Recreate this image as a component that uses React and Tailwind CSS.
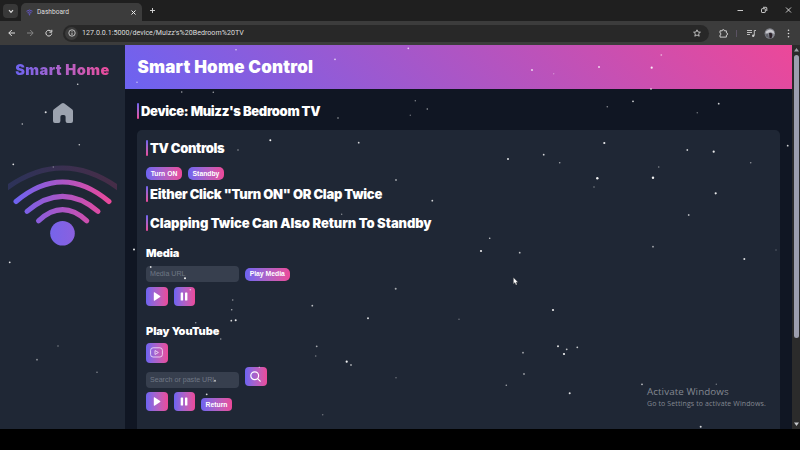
import React from "react";

// [x, y, radius, opacity]
const STARS = [
  [77.7, 84.3, 0.8, 0.8], [45.7, 112.3, 1, 0.85], [22.3, 124, 0.8, 0.7], [79.3, 144.7, 0.8, 0.75],
  [13.3, 164.3, 0.9, 0.85], [53.3, 167, 0.7, 0.4], [134, 249.5, 1, 0.9], [236, 49.7, 0.8, 0.7],
  [335, 59.3, 0.9, 0.7], [137, 82.3, 0.8, 0.6], [181.7, 92, 0.8, 0.6], [213.3, 92.3, 0.8, 0.6],
  [338, 118, 0.8, 0.6], [270.3, 140.3, 1, 0.95], [238, 150, 0.8, 0.5], [358.7, 142.7, 0.9, 0.8],
  [396, 180, 0.9, 0.6], [432.3, 200.7, 0.9, 0.8], [341.7, 214.3, 0.7, 0.5], [150.7, 267, 0.9, 0.8],
  [185, 278.3, 1, 0.95], [190.3, 289.7, 0.8, 0.6], [232.7, 300, 0.8, 0.5], [231.7, 309.7, 0.8, 0.6],
  [231.3, 320.7, 0.9, 0.8], [235.7, 320.3, 1, 0.9], [195.7, 322.7, 0.8, 0.5], [220.7, 339, 0.8, 0.5],
  [215, 380.7, 0.9, 0.7], [206.7, 394.3, 0.9, 0.8], [259.3, 367.3, 0.7, 0.5], [408.3, 48.3, 0.9, 0.7],
  [532, 70, 1.1, 0.7], [553.7, 73.7, 0.7, 0.35], [415.3, 100.7, 0.7, 0.5], [427.3, 109, 0.8, 0.6],
  [410.3, 115.3, 0.7, 0.4], [508, 159, 1, 0.85], [543.7, 154.7, 0.9, 0.8], [489.7, 238.3, 0.8, 0.75],
  [661.3, 55, 0.9, 0.45], [599, 67, 1, 0.75], [651.7, 67.7, 1.1, 0.9], [651, 89, 0.9, 0.6],
  [633, 101.3, 0.9, 0.8], [607.3, 106.7, 0.8, 0.5], [718.7, 103.7, 0.9, 0.8], [697.3, 112.7, 0.8, 0.4],
  [604.3, 143, 1.1, 0.9], [559.7, 162.7, 0.8, 0.6], [687.3, 150, 0.9, 0.75], [713.7, 151.7, 1.1, 0.9],
  [787.7, 145.7, 0.9, 0.8], [750.7, 162.7, 0.8, 0.5], [658.7, 167, 0.8, 0.45], [597.3, 178.3, 1.2, 0.95],
  [594, 187, 0.8, 0.4], [653, 177.7, 1.2, 0.95], [715.7, 193.3, 1.1, 0.9], [688.7, 215, 0.9, 0.65],
  [481, 251, 1.1, 0.9], [519.7, 252.7, 0.9, 0.7], [395.7, 288.7, 1, 0.6], [312.3, 305.7, 0.9, 0.7],
  [368, 318.3, 1, 0.8], [459, 319.3, 0.8, 0.35], [553, 310, 1.1, 0.9], [316.7, 346.3, 0.9, 0.6],
  [315.7, 356, 0.8, 0.4], [346.7, 361.7, 1.1, 0.95], [351, 365, 0.9, 0.6], [558, 346.3, 1, 0.85],
  [523, 352.7, 0.9, 0.6], [524, 374, 0.9, 0.55], [506.3, 385.3, 0.8, 0.6], [396, 377.7, 0.8, 0.35],
  [322.7, 414.7, 0.8, 0.35], [653, 246.7, 0.9, 0.6], [744.3, 259, 1, 0.85], [776, 250, 0.8, 0.25],
  [566.7, 349.3, 0.9, 0.7], [564, 354, 1.1, 0.95], [577.3, 347.3, 0.9, 0.75], [642, 384.3, 0.9, 0.7],
  [716.3, 384.3, 0.7, 0.4], [569.7, 393.3, 1, 0.85], [700.7, 426.7, 1, 0.8], [9.7, 262.3, 0.9, 0.85],
  [58, 346, 0.8, 0.4], [37, 359.7, 0.9, 0.5], [97, 372.3, 0.8, 0.45],
];

function Stars() {
  return (
    <svg className="pointer-events-none absolute inset-0 h-[450px] w-[800px]" viewBox="0 0 800 450">
      {STARS.map(([x, y, r, o], i) => (
        <circle key={i} cx={x} cy={y} r={r} fill="#fff" opacity={o} />
      ))}
    </svg>
  );
}

function Browser() {
  return (
    <div className="font-[Roboto,sans-serif] text-[#dedede]">
      <div className="flex h-[21px] items-start bg-[#1f1f1f]">
        <div className="mt-[4px] ml-[3px] flex h-[14px] w-[15px] items-center justify-center rounded-[4px] bg-[#383838]">
          <svg className="h-[5px] w-[6px]" viewBox="0 0 6 5" fill="none" stroke="#ddd" strokeWidth="1.2"><path d="M1 1.2 3 3.3 5 1.2" /></svg>
        </div>
        <div className="mt-[3px] ml-[3px] flex h-[18px] w-[121px] items-center rounded-t-[5px] bg-[#3c3c3c] pl-[5px]">
          <svg className="h-[7px] w-[7px]" viewBox="0 0 14 13" fill="none" stroke="#6557c5" strokeWidth="2"><path d="M1 4Q7-1 13 4M3 7q4-4 8 0M5 9q2-2 4 0" /><circle cx="7" cy="11" r="1.3" fill="#6557c5" stroke="none" /></svg>
          <span className="ml-[4px] w-[94px] shrink-0 text-[6.6px] leading-[10px]">Dashboard</span>
          <svg className="h-[5px] w-[5px] shrink-0" viewBox="0 0 5 5" stroke="#eee" strokeWidth="1"><path d="m.5.5 4 4m0-4-4 4" /></svg>
        </div>
        <svg className="mt-[8px] ml-[8px] h-[5px] w-[5px]" viewBox="0 0 5 5" stroke="#ddd" strokeWidth=".9"><path d="M2.500 0v5M0 2.500h5" /></svg>
        <svg className="mt-[6px] mr-[8px] ml-auto h-[8px] w-[56px]" viewBox="0 0 56 8" fill="none" stroke="#ddd" strokeWidth=".9">
          <path d="M1.500 4.500h5.500M50 1.500l5 5m0-5-5 5" />
          <rect x="25.500" y="2.700" width="3.800" height="3.800" rx=".6" />
          <path d="M27 1.300h3.100q.7 0 .7.700v3" />
        </svg>
      </div>
      <div className="flex h-[24px] items-center bg-[#3c3c3c] pl-[8px]">
        <svg className="h-[8px] w-[45px]" viewBox="0 0 45 8" fill="none" strokeWidth="1">
          <path stroke="#ddd" d="M7 4H.8M3.800 1 .8 4l3 3" />
          <path stroke="#858585" d="M19 4h6M22.200 1l3 3-3 3" />
          <path stroke="#ddd" d="M43.200 2.500A2.900 2.900 0 1 0 43.700 4.500M43.800.8v2.400h-2.400" />
        </svg>
        <div className="ml-[10px] flex h-[17px] w-[646px] items-center rounded-full bg-[#282828] pl-[2px]">
          <div className="flex h-[13px] w-[13px] items-center justify-center rounded-full bg-[#3c3c3c]">
            <svg className="h-[8px] w-[8px]" viewBox="0 0 8 8" fill="none" stroke="#ddd" strokeWidth=".8"><circle cx="4" cy="4" r="3.200" /><path d="M4 3.600V6M4 2v.8" /></svg>
          </div>
          <span className="ml-[4px] text-[7.1px] leading-[10px] tracking-[0.02px]">127.0.0.1:5000/device/Muizz's%20Bedroom%20TV</span>
          <svg className="mr-[8px] ml-auto h-[8px] w-[8px]" viewBox="0 0 8 8" fill="none" stroke="#ddd" strokeWidth=".8"><path d="m4 .8 1 2.200 2.400.2-1.800 1.600.6 2.400L4 6 1.800 7.200l.6-2.400L.6 3.200 3 3Z" /></svg>
        </div>
        <svg className="ml-[9px] h-[11px] w-[75px]" viewBox="0 0 75 11" fill="none" stroke="#ccc" strokeWidth="1">
          <path d="M2 2.800h2.200q0-1.200 1.100-1.200t1.100 1.200h2v2.100q1.300.1 1.300 1.100t-1.300 1.100v2H2V6.900q1-.1 1-.9t-1-.9Z" />
          <path stroke="#5a5262" d="M18.500 2v7" />
          <path d="M29 2.500h5M29 4.500h5M29 6.500h3M36.300 7.500V2.500h1.700" strokeWidth=".9" />
          <circle cx="35.200" cy="7.700" r="1.200" fill="#ccc" stroke="none" />
          <circle cx="51.800" cy="5.500" r="5.200" fill="#85878f" stroke="none" />
          <path d="M47.500 4q4-4.500 8-1l1 3-4-2-4 1.500Z" fill="#c9c9ce" stroke="none" />
          <path d="M51 5h2.500l1 2-1 3.300h-2Z" fill="#2a2028" stroke="none" />
          <path d="M47 6.500 50 6l1 4q-3-.5-4-3.500Z" fill="#5f626a" stroke="none" />
          <g fill="#ddd" stroke="none"><circle cx="70.500" cy="2.200" r=".8" /><circle cx="70.500" cy="5.500" r=".8" /><circle cx="70.500" cy="8.800" r=".8" /></g>
        </svg>
      </div>
    </div>
  );
}

function Sidebar() {
  return (
    <aside className="flex w-[125px] shrink-0 flex-col items-center bg-[#1f2735]">
      <h1 className="mt-[14px] bg-linear-to-r from-[#6c63f1] to-[#ec4899] bg-clip-text text-[14.6px] leading-[22px] font-black tracking-[0.430px] whitespace-nowrap text-transparent">Smart Home</h1>
      <svg className="mt-[22px] h-[20px] w-[20px]" viewBox="0 0 20 20" fill="#9ca3af">
        <path d="M8.600.5Q10-.5 11.400.5L19 6.300Q20 7 20 8.300V18q0 2-2 2h-3.500q-1.900 0-1.900-2v-4.300q0-1.700-1.700-1.700H9.100q-1.700 0-1.700 1.700V18q0 2-1.900 2H2q-2 0-2-2V8.300Q0 7 1 6.300Z" />
      </svg>
      <svg className="mt-[41px] h-[84px] w-[109px]" viewBox="8 164 109 84" fill="none">
        <defs>
          <linearGradient id="wave" gradientUnits="userSpaceOnUse" x1="14" y1="190" x2="112" y2="190">
            <stop stopColor="#6c63f1" /><stop offset="1" stopColor="#ec4899" />
          </linearGradient>
          <linearGradient id="dot" x1="0" y1="0" x2="1" y2="0">
            <stop stopColor="#7664ea" /><stop offset="1" stopColor="#8a60df" />
          </linearGradient>
        </defs>
        <path d="M6 188.500Q62.500 147.500 119 188.500" stroke="url(#wave)" strokeWidth="5" opacity=".19" />
        <g stroke="url(#wave)" strokeWidth="5" strokeLinecap="round">
          <path d="M16 201.500Q62.500 162.500 109 201.500" />
          <path d="M27 211.300Q62.500 181.500 98 211.300" />
          <path d="M38.500 220.800Q62.500 198.500 86.800 220.800" />
        </g>
        <circle cx="62.500" cy="233.200" r="12.300" fill="url(#dot)" />
      </svg>
    </aside>
  );
}

function Heading({ children, className }) {
  return (
    <div className={"flex items-start " + className}>
      <span className="h-[16px] w-[2px] shrink-0 rounded-[1px] bg-linear-to-b from-[#6c63f1] to-[#ec4899]" />
      <h2 className="ml-[2px] leading-[16px] font-black whitespace-nowrap">{children}</h2>
    </div>
  );
}

function Button({ children, className }) {
  return (
    <button className={"flex shrink-0 items-center justify-center bg-linear-to-r from-[#6c63f1] to-[#ec4899] font-[Liberation_Sans,Arial,sans-serif] text-[6.8px] leading-[8px] font-bold whitespace-nowrap text-white " + className}>
      {children}
    </button>
  );
}

function PlayPause() {
  return (
    <>
      <Button className="h-[19px] w-[21.500px] rounded-[4px]">
        <svg className="mb-[1px] h-[9px] w-[8px]" viewBox="0 0 8 9" fill="#fff"><path d="M.8.700Q.8 0 1.500.3l5.600 3.700q.7.500 0 1L1.500 8.700Q.8 9 .8 8.300Z" /></svg>
      </Button>
      <Button className="ml-[6px] h-[19px] w-[21.500px] rounded-[4px]">
        <svg className="mb-[1px] h-[9px] w-[8px]" viewBox="0 0 8 9" fill="#fff"><rect x=".7" y=".5" width="2.400" height="8" rx=".6" /><rect x="5" y=".5" width="2.400" height="8" rx=".6" /></svg>
      </Button>
    </>
  );
}

function Field({ children }) {
  return (
    <div className="flex h-[16px] w-[93px] items-center rounded-[4px] bg-[#373f4e] pl-[4px] font-[Liberation_Sans,Arial,sans-serif] text-[7.100px] leading-[9px] text-[#6f7785]">
      {children}
    </div>
  );
}

export default function App() {
  return (
    <div className="relative h-[450px] w-[800px] overflow-hidden bg-black font-[Inter,sans-serif] text-white">
      <Browser />
      <div className="flex h-[384px]">
        <Sidebar />
        <main className="flex w-[667px] flex-col bg-[#101623]">
          <header className="flex h-[44px] shrink-0 items-center bg-linear-[45deg] from-[#6c63f1] to-[#ec4899] pl-[12.500px]">
            <h1 className="text-[17px] leading-[24px] font-black tracking-[0.200px]">Smart Home Control</h1>
          </header>
          <Heading className="mt-[14px] ml-[12px] h-[16px] text-[13px] tracking-[-0.330px]">Device: Muizz's Bedroom TV</Heading>
          <section className="mt-[11px] ml-[12px] flex h-[300px] w-[643px] flex-col rounded-t-[5px] bg-[#1f2735] pl-[9px]">
            <Heading className="mt-[10px] h-[16px] text-[13px] tracking-[-0.350px]">TV Controls</Heading>
            <div className="mt-[11px] flex gap-[6px]">
              <Button className="h-[13px] w-[36px] rounded-[5px]">Turn ON</Button>
              <Button className="h-[13px] w-[36px] rounded-[5px]">Standby</Button>
            </div>
            <Heading className="mt-[6px] h-[16px] text-[13px] tracking-[-0.280px]">Either Click "Turn ON" OR Clap Twice</Heading>
            <Heading className="mt-[13px] h-[16px] text-[13px] tracking-[-0.070px]">Clapping Twice Can Also Return To Standby</Heading>
            <h3 className="mt-[14px] text-[11px] leading-[16px] font-black tracking-[-0.200px]">Media</h3>
            <div className="mt-[5px] flex items-center gap-[6px]">
              <Field>Media URL</Field>
              <Button className="h-[13px] w-[44.500px] rounded-[5px]">Play Media</Button>
            </div>
            <div className="mt-[5px] flex"><PlayPause /></div>
            <h3 className="mt-[17px] text-[11px] leading-[16px] font-black tracking-[-0.070px]">Play YouTube</h3>
            <Button className="mt-[4px] h-[20px] w-[21.500px] rounded-[4px]">
              <svg className="mb-[1px] h-[11px] w-[13px]" viewBox="0 0 13 11" fill="none" stroke="#f5e8fb" strokeWidth=".8"><rect x=".6" y=".8" width="11.800" height="9.200" rx="2.500" /><path d="m5 3.500 3.400 2L5 7.500Z" /></svg>
            </Button>
            <div className="mt-[4px] flex h-[21px] items-start">
              <div className="mt-[5px]"><Field>Search or paste URL</Field></div>
              <Button className="ml-[6px] h-[19px] w-[22px] rounded-[4px]">
                <svg className="mr-[1px] mb-[1px] h-[11px] w-[11px]" viewBox="0 0 11 11" fill="none" stroke="#fff" strokeWidth="1.200" strokeLinecap="round"><circle cx="4.700" cy="4.700" r="3.900" /><path d="m7.600 7.600 2.600 2.600" /></svg>
              </Button>
            </div>
            <div className="mt-[4px] flex items-end"><PlayPause /><Button className="ml-[6px] h-[13px] w-[31px] rounded-[4px]">Return</Button></div>
          </section>
        </main>
        <div className="flex w-[8px] flex-col items-center bg-[#2b2b2b]">
          <svg className="mt-[3px] h-[4px] w-[5px]" viewBox="0 0 5 4" fill="#9d9fa6"><path d="M2.500 0 5 3.500H0Z" /></svg>
          <div className="mt-[3px] h-[283px] w-[5px] rounded-full bg-[#9c9eae]" />
          <svg className="mt-auto mb-[3px] h-[4px] w-[5px]" viewBox="0 0 5 4" fill="#c5c7cb"><path d="M0 .5h5L2.500 4Z" /></svg>
        </div>
      </div>
      <Stars />
      <div className="absolute top-[385px] left-[647px] font-[Open_Sans,sans-serif] text-[#838891]">
        <p className="text-[9.800px] leading-[13px] tracking-[0.080px] whitespace-nowrap">Activate Windows</p>
        <p className="text-[7px] leading-[12px] tracking-[0.120px] whitespace-nowrap">Go to Settings to activate Windows.</p>
      </div>
      <svg className="absolute top-[277px] left-[513px] h-[9px] w-[6px]" viewBox="0 0 6 9"><path d="M.4.500v6.400l1.500-1.300 1 2.400 1.200-.5-1-2.300h1.900Z" fill="#fff" stroke="#222" strokeWidth=".3" /></svg>
    </div>
  );
}
